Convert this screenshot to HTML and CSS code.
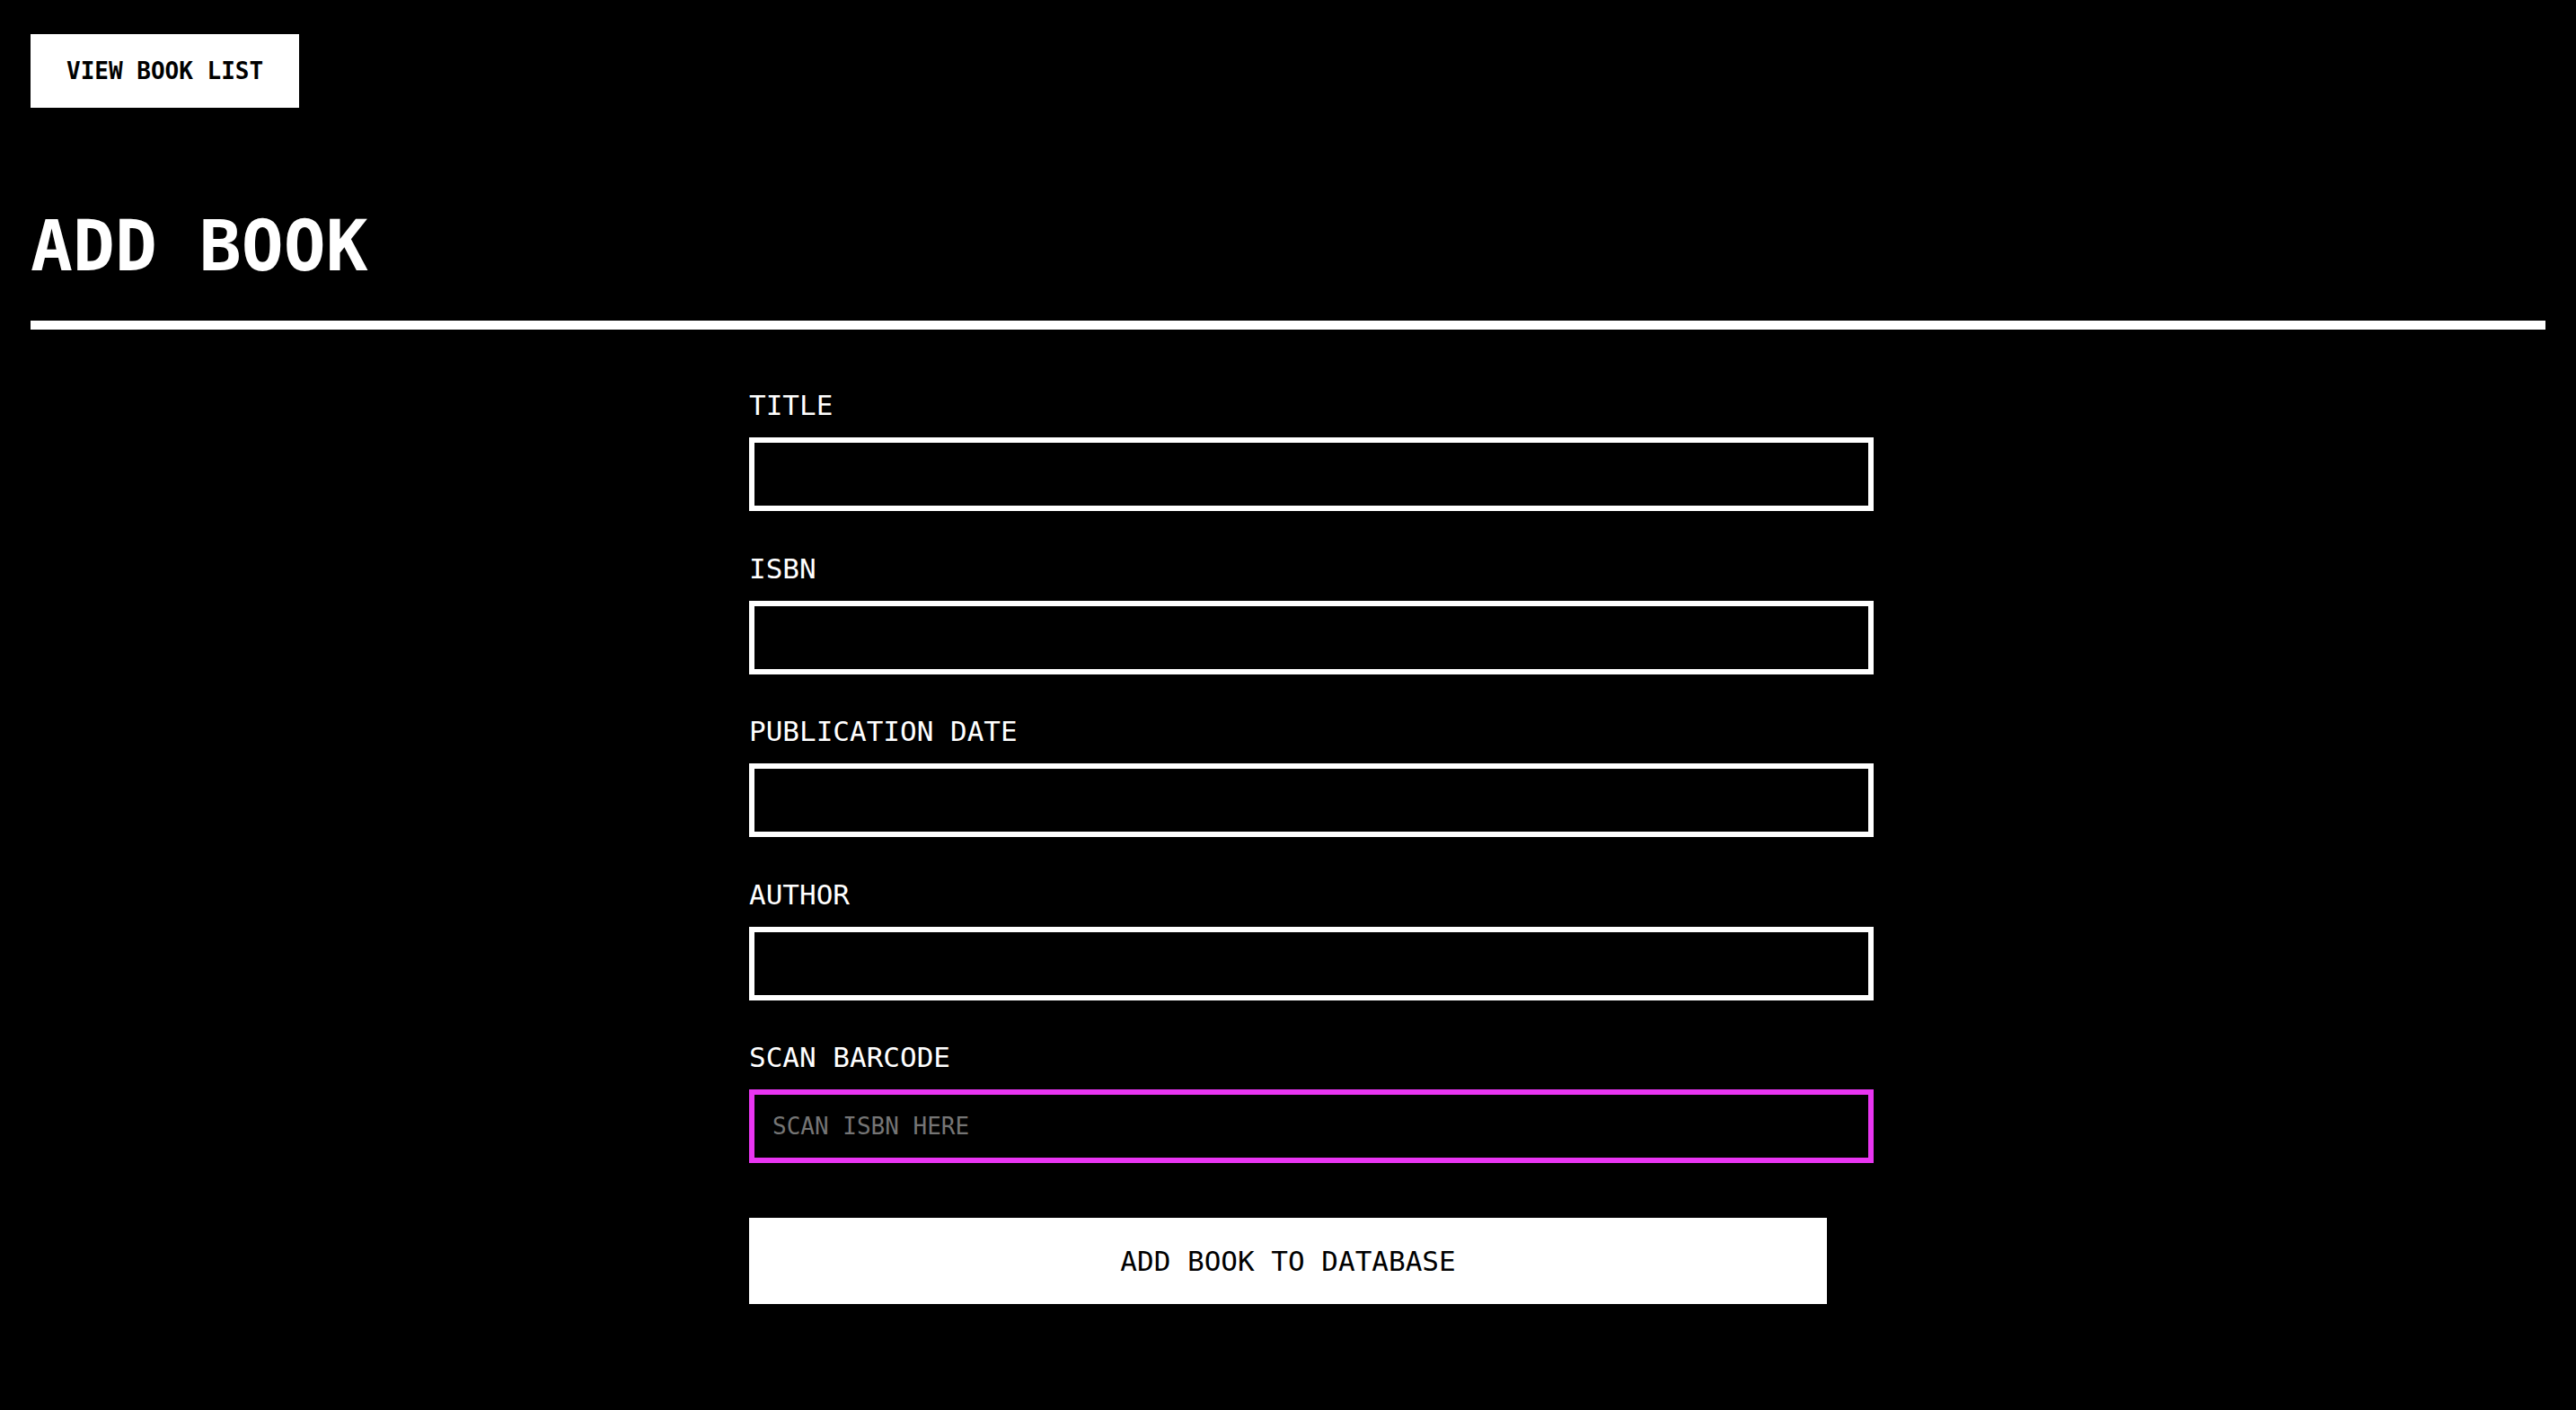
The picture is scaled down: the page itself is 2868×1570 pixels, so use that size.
FILE: index.html
```html
<!DOCTYPE html>
<html>
<head>
  <meta charset="utf-8">
  <title>Add Book</title>
  <link rel="stylesheet" href="styles.css">
</head>
<body>
  <button type="button" class="btn-nav" id="listBtn">VIEW BOOK LIST</button>

  <h1>ADD BOOK</h1>
  <div class="rule"></div>

  <form id="bookForm" class="book-form">
    <div class="form-group">
      <label for="title">TITLE</label>
      <input type="text" id="title" name="title" autocomplete="off" />
    </div>
    <div class="form-group">
      <label for="isbn">ISBN</label>
      <input type="text" id="isbn" name="isbn" autocomplete="off" />
    </div>
    <div class="form-group">
      <label for="publicationDate">PUBLICATION DATE</label>
      <input type="text" id="publicationDate" name="publicationDate" autocomplete="off" />
    </div>
    <div class="form-group">
      <label for="author">AUTHOR</label>
      <input type="text" id="author" name="author" autocomplete="off" />
    </div>
    <div class="form-group">
      <label for="barcode">SCAN BARCODE</label>
      <input type="text" id="barcode" name="barcode" class="scan" placeholder="SCAN ISBN HERE" autocomplete="off" />
    </div>
    <button type="submit" class="btn-submit">ADD BOOK TO DATABASE</button>
  </form>
</body>
</html>
```

FILE: styles.css
```css
body {
  margin: 0;
  padding: 38px 34px;
  background: #000;
  color: #fff;
  font-family: "DejaVu Sans Mono", monospace;
}

.btn-nav {
  display: block;
  padding: 26px 40px;
  border: none;
  border-radius: 0;
  background: #fff;
  color: #000;
  font-family: inherit;
  font-size: 26px;
  font-weight: bold;
  line-height: 30px;
  cursor: pointer;
}

h1 {
  margin: 106px 0 35px;
  font-size: 78px;
  line-height: 96px;
  font-weight: bold;
}

.rule {
  height: 10px;
  background: #fff;
}

.book-form {
  width: 1200px;
  margin: 66px auto 0;
}

.form-group {
  margin-bottom: 45.5px;
}

label {
  display: block;
  margin-bottom: 17px;
  font-size: 31px;
  line-height: 37px;
}

input {
  display: block;
  width: 100%;
  height: 70px;
  padding: 0 20px;
  border: 6px solid #fff;
  border-radius: 0;
  background: #000;
  color: #fff;
  font-family: inherit;
  font-size: 26px;
  outline: none;
}

input::placeholder {
  color: #757575;
}

input.scan {
  border-color: #e935f2;
}

.btn-submit {
  display: block;
  width: 100%;
  height: 96px;
  margin-top: 61px;
  border: none;
  border-radius: 0;
  background: #fff;
  color: #000;
  font-family: inherit;
  font-size: 31px;
  cursor: pointer;
}
```
